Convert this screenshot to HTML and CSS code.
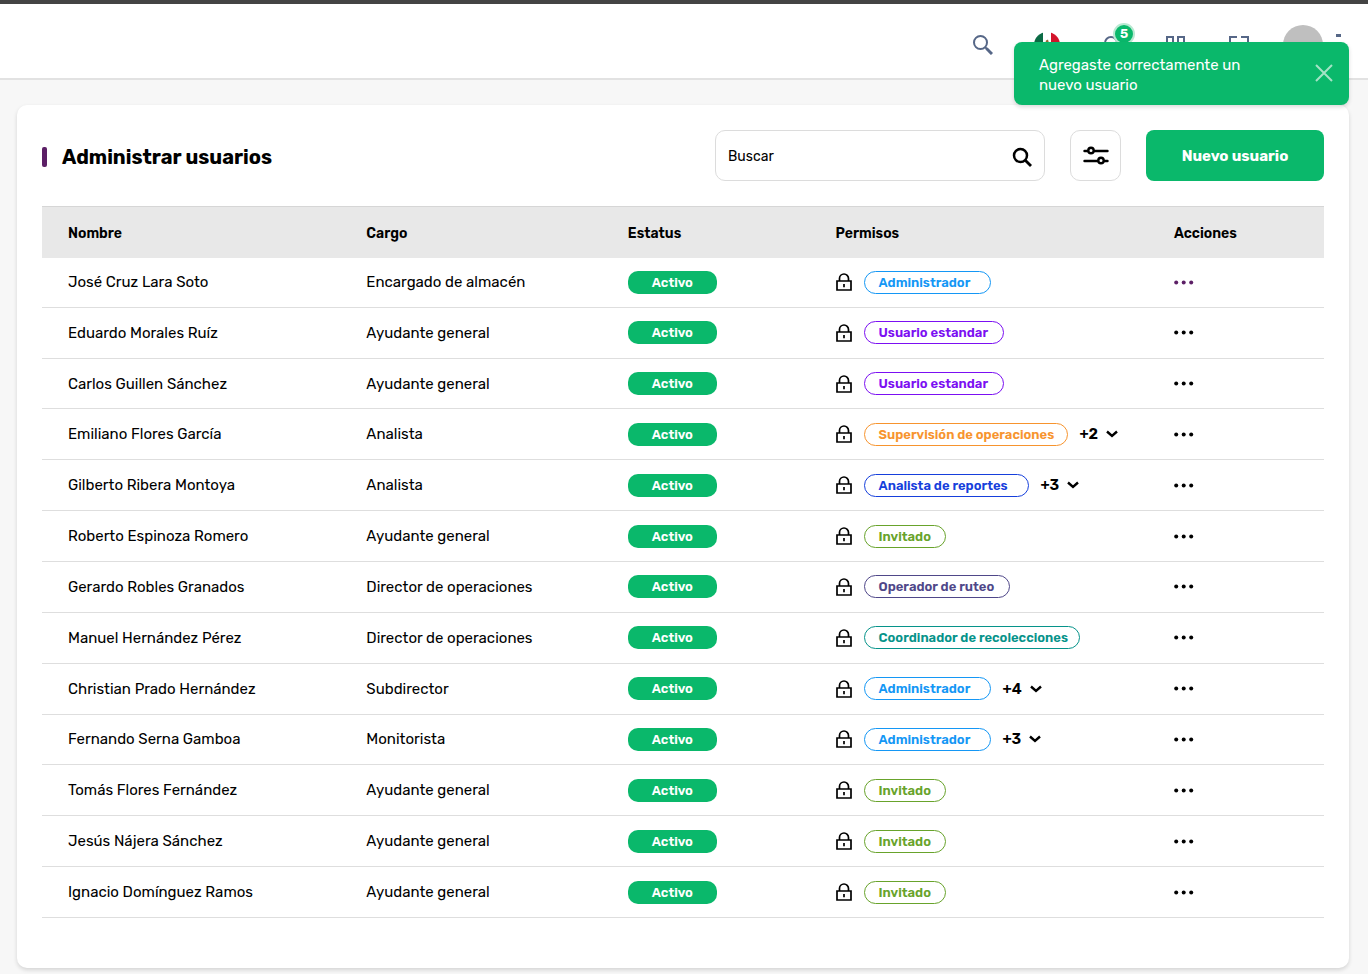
FILE: index.html
```html
<!DOCTYPE html>
<html lang="es">
<head>
    <meta charset="UTF-8">
    <meta name="viewport" content="width=device-width, initial-scale=1.0">
    <title>Administrar usuarios</title>
    <link rel="stylesheet" href="styles.css">
</head>
<body>

    <!-- Shared icons -->
    <svg class="sprite" aria-hidden="true">
        <symbol id="lock" viewBox="0 0 16 18">
            <path d="M1 8h14v9H1zM3.500 8V5.500a4.500 4.500 0 0 1 9 0V8M8 11v3.200" fill="none" stroke="currentColor" stroke-width="1.700"/>
        </symbol>
        <symbol id="chevron" viewBox="0 0 12 8">
            <path d="M1 1.500l5 4.500 5-4.500" fill="none" stroke="currentColor" stroke-width="2.400"/>
        </symbol>
        <symbol id="dots" viewBox="0 0 20 5">
            <circle cx="2.200" cy="2.500" r="2"/>
            <circle cx="9.700" cy="2.500" r="2"/>
            <circle cx="17.200" cy="2.500" r="2"/>
        </symbol>
    </svg>

    <!-- Top bar -->
    <header class="topbar">
        <button class="icon-btn" aria-label="Buscar">
            <svg width="20" height="20" viewBox="0 0 20 20" fill="none" stroke="currentColor">
                <circle cx="7.500" cy="7.500" r="6.500" stroke-width="2"/>
                <path d="M12 12l2 2" stroke-width="2"/>
                <path d="M13.500 13.500l5.500 5.500" stroke-width="3"/>
            </svg>
        </button>
        <button class="icon-btn" aria-label="Idioma">
            <svg width="26" height="26" viewBox="0 0 26 26">
                <clipPath id="round"><circle cx="13" cy="13" r="13"/></clipPath>
                <g clip-path="url(#round)">
                    <path fill="#fff" d="M0 0h26v26H0z"/>
                    <path fill="#0b6b45" d="M0 0h9v26H0z"/>
                    <path fill="#d3152b" d="M17 0h9v26h-9z"/>
                    <path fill="#9a6a35" d="M12 8.500l2-1 .500 2 2 3-3 4-3-2z"/>
                </g>
            </svg>
        </button>
        <button class="icon-btn" aria-label="Notificaciones">
            <svg width="20" height="20" viewBox="0 0 20 20" fill="none" stroke="currentColor" stroke-width="2">
                <path d="M2 16h16l-2-3V8a6 6 0 0 0-12 0v5zM8 18.500h4"/>
            </svg>
            <span class="count">5</span>
        </button>
        <button class="icon-btn" aria-label="Aplicaciones">
            <svg width="20" height="20" viewBox="0 0 20 20" fill="none" stroke="currentColor" stroke-width="2">
                <path d="M2 2h6v7H2zM13 2h6v7h-6zM2 13h6v6H2zM13 13h6v6h-6z"/>
            </svg>
        </button>
        <button class="icon-btn" aria-label="Pantalla completa">
            <svg width="20" height="20" viewBox="0 0 20 20" fill="none" stroke="currentColor" stroke-width="2">
                <path d="M1 8V2h7M12 2h7v6M1 13v6h7M19 13v6h-7"/>
            </svg>
        </button>
        <button class="icon-btn" aria-label="Perfil"><span class="avatar"></span></button>
        <button class="kebab" aria-label="Menú">
            <svg width="6" height="22" viewBox="0 0 6 22" fill="currentColor">
                <path d="M1 0h5v3H1zM1 9h5v3H1zM1 18h5v3H1z"/>
            </svg>
        </button>
    </header>

    <!-- Notification -->
    <div class="toast" role="status">
        <p>Agregaste correctamente un nuevo usuario</p>
        <button aria-label="Cerrar">
            <svg width="18" height="18" viewBox="0 0 18 18" fill="none" stroke="currentColor" stroke-width="2">
                <path d="M1 1l16 16M17 1L1 17"/>
            </svg>
        </button>
    </div>

    <main class="card">
        <div class="toolbar">
            <h1>Administrar usuarios</h1>
            <form class="search">
                <input type="text" placeholder="Buscar" aria-label="Buscar">
                <button type="button" aria-label="Buscar usuario">
                    <svg width="20" height="20" viewBox="0 0 20 20" fill="none" stroke="currentColor">
                        <circle cx="8.500" cy="8.500" r="6.500" stroke-width="2.500"/>
                        <path d="M13 13l6 6" stroke-width="2.800"/>
                    </svg>
                </button>
            </form>
            <button class="filter-btn" aria-label="Filtros">
                <svg width="26" height="20" viewBox="0 0 26 20" fill="#fff" stroke="currentColor" stroke-width="2.400" stroke-linecap="round">
                    <path d="M1.500 5h23M1.500 15h23"/>
                    <circle cx="8" cy="4.500" r="2.700"/>
                    <circle cx="18" cy="14.500" r="2.700"/>
                </svg>
            </button>
            <button class="new-btn">Nuevo usuario</button>
        </div>

        <!-- Users table -->
        <table>
            <thead>
                <tr>
                    <th class="col-name">Nombre</th>
                    <th class="col-job">Cargo</th>
                    <th class="col-status">Estatus</th>
                    <th class="col-roles">Permisos</th>
                    <th>Acciones</th>
                </tr>
            </thead>
            <tbody>
                <tr>
                    <td>José Cruz Lara Soto</td>
                    <td>Encargado de almacén</td>
                    <td><span class="status">Activo</span></td>
                    <td><div class="roles"><svg class="lock"><use href="#lock"/></svg><span class="role admin">Administrador</span></div></td>
                    <td><button class="more active" aria-label="Acciones"><svg><use href="#dots"/></svg></button></td>
                </tr>
                <tr>
                    <td>Eduardo Morales Ruíz</td>
                    <td>Ayudante general</td>
                    <td><span class="status">Activo</span></td>
                    <td><div class="roles"><svg class="lock"><use href="#lock"/></svg><span class="role standard">Usuario estandar</span></div></td>
                    <td><button class="more" aria-label="Acciones"><svg><use href="#dots"/></svg></button></td>
                </tr>
                <tr>
                    <td>Carlos Guillen Sánchez</td>
                    <td>Ayudante general</td>
                    <td><span class="status">Activo</span></td>
                    <td><div class="roles"><svg class="lock"><use href="#lock"/></svg><span class="role standard">Usuario estandar</span></div></td>
                    <td><button class="more" aria-label="Acciones"><svg><use href="#dots"/></svg></button></td>
                </tr>
                <tr>
                    <td>Emiliano Flores García</td>
                    <td>Analista</td>
                    <td><span class="status">Activo</span></td>
                    <td><div class="roles"><svg class="lock"><use href="#lock"/></svg><span class="role supervisor">Supervisión de operaciones</span><button class="extra">+2 <svg><use href="#chevron"/></svg></button></div></td>
                    <td><button class="more" aria-label="Acciones"><svg><use href="#dots"/></svg></button></td>
                </tr>
                <tr>
                    <td>Gilberto Ribera Montoya</td>
                    <td>Analista</td>
                    <td><span class="status">Activo</span></td>
                    <td><div class="roles"><svg class="lock"><use href="#lock"/></svg><span class="role analyst">Analista de reportes</span><button class="extra">+3 <svg><use href="#chevron"/></svg></button></div></td>
                    <td><button class="more" aria-label="Acciones"><svg><use href="#dots"/></svg></button></td>
                </tr>
                <tr>
                    <td>Roberto Espinoza Romero</td>
                    <td>Ayudante general</td>
                    <td><span class="status">Activo</span></td>
                    <td><div class="roles"><svg class="lock"><use href="#lock"/></svg><span class="role guest">Invitado</span></div></td>
                    <td><button class="more" aria-label="Acciones"><svg><use href="#dots"/></svg></button></td>
                </tr>
                <tr>
                    <td>Gerardo Robles Granados</td>
                    <td>Director de operaciones</td>
                    <td><span class="status">Activo</span></td>
                    <td><div class="roles"><svg class="lock"><use href="#lock"/></svg><span class="role operator">Operador de ruteo</span></div></td>
                    <td><button class="more" aria-label="Acciones"><svg><use href="#dots"/></svg></button></td>
                </tr>
                <tr>
                    <td>Manuel Hernández Pérez</td>
                    <td>Director de operaciones</td>
                    <td><span class="status">Activo</span></td>
                    <td><div class="roles"><svg class="lock"><use href="#lock"/></svg><span class="role coordinator">Coordinador de recolecciones</span></div></td>
                    <td><button class="more" aria-label="Acciones"><svg><use href="#dots"/></svg></button></td>
                </tr>
                <tr>
                    <td>Christian Prado Hernández</td>
                    <td>Subdirector</td>
                    <td><span class="status">Activo</span></td>
                    <td><div class="roles"><svg class="lock"><use href="#lock"/></svg><span class="role admin">Administrador</span><button class="extra">+4 <svg><use href="#chevron"/></svg></button></div></td>
                    <td><button class="more" aria-label="Acciones"><svg><use href="#dots"/></svg></button></td>
                </tr>
                <tr>
                    <td>Fernando Serna Gamboa</td>
                    <td>Monitorista</td>
                    <td><span class="status">Activo</span></td>
                    <td><div class="roles"><svg class="lock"><use href="#lock"/></svg><span class="role admin">Administrador</span><button class="extra">+3 <svg><use href="#chevron"/></svg></button></div></td>
                    <td><button class="more" aria-label="Acciones"><svg><use href="#dots"/></svg></button></td>
                </tr>
                <tr>
                    <td>Tomás Flores Fernández</td>
                    <td>Ayudante general</td>
                    <td><span class="status">Activo</span></td>
                    <td><div class="roles"><svg class="lock"><use href="#lock"/></svg><span class="role guest">Invitado</span></div></td>
                    <td><button class="more" aria-label="Acciones"><svg><use href="#dots"/></svg></button></td>
                </tr>
                <tr>
                    <td>Jesús Nájera Sánchez</td>
                    <td>Ayudante general</td>
                    <td><span class="status">Activo</span></td>
                    <td><div class="roles"><svg class="lock"><use href="#lock"/></svg><span class="role guest">Invitado</span></div></td>
                    <td><button class="more" aria-label="Acciones"><svg><use href="#dots"/></svg></button></td>
                </tr>
                <tr>
                    <td>Ignacio Domínguez Ramos</td>
                    <td>Ayudante general</td>
                    <td><span class="status">Activo</span></td>
                    <td><div class="roles"><svg class="lock"><use href="#lock"/></svg><span class="role guest">Invitado</span></div></td>
                    <td><button class="more" aria-label="Acciones"><svg><use href="#dots"/></svg></button></td>
                </tr>
            </tbody>
        </table>
    </main>

</body>
</html>
```
FILE: styles.css
```css
/* General Styles */
* {
    box-sizing: border-box;
}

body {
    margin: 0;
    font-family: 'Rubik', 'Inter', sans-serif;
    font-size: 15px;
    color: #000;
    background-color: #f7f7f7;
}

button, input {
    font: inherit;
    color: inherit;
}

button {
    padding: 0;
    border: none;
    background: none;
    cursor: pointer;
}

svg {
    display: block;
}

.sprite {
    display: none;
}

/* Top bar */
.topbar {
    display: flex;
    justify-content: flex-end;
    align-items: center;
    height: 80px;
    padding-top: 8px;
    padding-right: 27px;
    background-color: #fff;
    border-top: 4px solid #444;
    border-bottom: 2px solid #e2e2e2;
    color: #566787;
}

.icon-btn {
    position: relative;
    display: flex;
    justify-content: center;
    width: 64px;
}

/* Counter over the bell */
.count {
    position: absolute;
    top: -12px;
    right: 8px;
    width: 22px;
    height: 22px;
    border: 2px solid #b9e9d2;
    border-radius: 50%;
    background-color: #0ab86b;
    color: #fff;
    font-size: 13px;
    font-weight: 600;
    line-height: 18px;
}

.avatar {
    width: 40px;
    height: 40px;
    border-radius: 50%;
    background-color: #bfbfbf;
}

/* Notification */
.toast {
    position: absolute;
    top: 42px;
    right: 19px;
    display: flex;
    justify-content: space-between;
    align-items: flex-start;
    width: 335px;
    padding: 13px 16px 10px 25px;
    border-radius: 8px;
    background-color: #0ab86b;
    color: #fff;
    box-shadow: 0 2px 4px rgba(0, 0, 0, 0.15);
}

.toast p {
    width: 220px;
    margin: 0;
    line-height: 20px;
}

.toast button {
    margin-top: 9px;
    color: #a5e3c6;
}

/* Main card */
.card {
    margin: 25px 19px 6px 17px;
    padding: 25px 25px 50px;
    border-radius: 10px;
    background-color: #fff;
    box-shadow: 0 2px 4px rgba(0, 0, 0, 0.14);
}

.toolbar {
    display: flex;
    align-items: center;
    gap: 25px;
    margin-bottom: 25px;
}

h1 {
    display: flex;
    align-items: center;
    gap: 15px;
    margin: 0 auto 0 0;
    padding-top: 2px;
    font-size: 20px;
    font-weight: 700;
}

h1::before {
    content: "";
    width: 5px;
    height: 20px;
    border-radius: 2px;
    background-color: #5c1f66;
}

.search {
    display: flex;
    align-items: center;
    width: 330px;
    height: 51px;
    padding: 2px 12px 0;
    border: 1px solid #dcdcdc;
    border-radius: 10px;
}

.search input {
    flex: 1;
    min-width: 0;
    padding: 0;
    border: none;
    outline: none;
    background: none;
    font-size: 14px;
}

.search input::placeholder {
    color: #000;
    opacity: 1;
}

.filter-btn {
    display: flex;
    align-items: center;
    justify-content: center;
    width: 51px;
    height: 51px;
    border: 1px solid #dcdcdc;
    border-radius: 10px;
}

.new-btn {
    width: 178px;
    height: 51px;
    border-radius: 8px;
    background-color: #0ab86b;
    color: #fff;
    font-weight: 700;
}

/* Table */
table {
    width: 100%;
    height: 712px;
    table-layout: fixed;
    border-collapse: collapse;
    text-align: left;
}

th, td {
    padding: 0;
    border-bottom: 1px solid #dedede;
}

th {
    height: 51px;
    padding-top: 3px;
    border-top: 1px solid #d6d6d6;
    border-bottom: none;
    background-color: #e8e8e8;
    font-size: 14px;
    font-weight: 600;
}

th:first-child, td:first-child {
    padding-left: 26px;
}

.col-name {
    width: 25.3%;
}

.col-job {
    width: 20.4%;
}

.col-status {
    width: 16.2%;
}

.col-roles {
    width: 26.4%;
}

.status {
    display: block;
    width: 89px;
    border-radius: 10px;
    background-color: #0ab86b;
    color: #fff;
    font-size: 13px;
    font-weight: 600;
    line-height: 23px;
    text-align: center;
}

.roles {
    display: flex;
    align-items: center;
    gap: 12px;
}

.lock {
    width: 16px;
    height: 18px;
}

/* Role badges */
.role {
    padding: 0 11px 0 14px;
    border: 1px solid;
    border-radius: 12px;
    font-size: 13px;
    font-weight: 600;
    line-height: 21px;
    white-space: nowrap;
}

.admin {
    min-width: 127px;
    color: #1497f5;
}

.standard {
    min-width: 140px;
    color: #7b0ff2;
}

.supervisor {
    min-width: 204px;
    color: #f7942e;
}

.analyst {
    min-width: 165px;
    color: #163fdc;
}

.guest {
    min-width: 82px;
    color: #68a32b;
}

.operator {
    min-width: 146px;
    color: #4f4789;
}

.coordinator {
    min-width: 216px;
    color: #06938a;
}

.extra {
    display: flex;
    align-items: center;
    gap: 8px;
    font-weight: 600;
}

.extra svg {
    width: 12px;
    height: 8px;
}

.more {
    display: block;
}

.more svg {
    width: 20px;
    height: 5px;
    fill: currentColor;
}

.active {
    color: #5c1f66;
}
```
